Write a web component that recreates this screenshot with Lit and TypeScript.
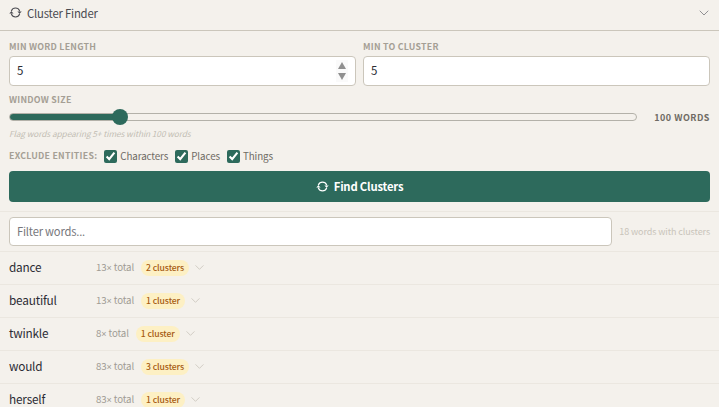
import { LitElement, html, css, svg } from "lit";
import { customElement, state } from "lit/decorators.js";

const chevron = (color: string, w: number) => html`<svg class="chev" width=${w} height=${w} viewBox="0 0 24 24" fill="none" stroke=${color} stroke-width="1.6" stroke-linecap="round" stroke-linejoin="round"><path d="M4 8l8 8 8-8"></path></svg>`;

const refresh = (size: number, width: number) => html`<svg width=${size} height=${size} viewBox="0 0 24 24" fill="none" stroke="currentColor" stroke-width=${width} stroke-linecap="round">
  ${svg`<path d="M4.5 9a8 8 0 0 1 15 0"></path>
  <path d="M19.5 15a8 8 0 0 1-15 0"></path>
  <path d="M23.5 10l-4 4.5-4-4.5z" fill="currentColor" stroke="none"></path>
  <path d="M.5 14l4-4.5 4 4.5z" fill="currentColor" stroke="none"></path>`}
</svg>`;

const WORDS = [
  { word: "dance", total: 13, clusters: 2 },
  { word: "beautiful", total: 13, clusters: 1 },
  { word: "twinkle", total: 8, clusters: 1 },
  { word: "would", total: 83, clusters: 3 },
  { word: "herself", total: 83, clusters: 1 },
];

@customElement("app-root")
export class AppRoot extends LitElement {
  @state() windowSize = 100;

  static styles = css`
    :host {
      display: block;
      height: 407px;
      overflow: hidden;
      background: #f4f1ec;
      color: #2c2c34;
      font-family: "Noto Sans CJK SC", "Noto Sans", sans-serif;
      font-size: 11px;
    }
    input, button { font-family: inherit; }
    .header {
      display: flex;
      align-items: center;
      justify-content: space-between;
      height: 30px;
      padding: 0 9px;
      border-bottom: 1px solid #cbc6bb;
      color: #4a4a50;
    }
    .title { display: flex; align-items: center; gap: 5px; font-size: 11.3px; letter-spacing: -0.2px; line-height: 26px; margin-top: -5px; }
    .header .chev { margin-top: -5px; }
    .settings { padding: 10px 9px 0; }
    .cols { display: grid; grid-template-columns: 1fr 1fr; gap: 7px; }
    .label {
      display: block;
      font-size: 8.8px;
      line-height: 12px;
      font-weight: 700;
      letter-spacing: 0.25px;
      color: #a59f95;
    }
    .cols .label { margin-bottom: 3px; }
    .field { position: relative; }
    .text {
      display: block;
      width: 100%;
      box-sizing: border-box;
      height: 30px;
      padding: 0 7px 2px;
      background: #fff;
      border: 1px solid #cbc6bb;
      border-radius: 4px;
      font-size: 11.5px;
      color: #2c2c34;
      outline: none;
    }
    .text::-webkit-inner-spin-button { -webkit-appearance: none; }
    .text::placeholder { color: #77777c; font-size: 11.2px; letter-spacing: -0.2px; }
    .spin {
      position: absolute;
      top: 4px;
      right: 8px;
      width: 12px;
      height: 22px;
      display: flex;
      flex-direction: column;
      align-items: center;
      justify-content: space-between;
      padding: 2px 0;
      box-sizing: border-box;
      background: #fafafa;
    }
    .up, .down { width: 0; height: 0; border-left: 4.5px solid transparent; border-right: 4.5px solid transparent; }
    .up { border-bottom: 7px solid #8f8f8f; }
    .down { border-top: 7px solid #8f8f8f; }
    .window { margin-top: 8px; }
    .slider-row { display: flex; align-items: center; gap: 17px; margin-top: 1px; height: 20px; }
    input[type="range"] {
      -webkit-appearance: none;
      appearance: none;
      flex: 1;
      min-width: 0;
      margin: 0;
      height: 16px;
      background: transparent;
    }
    input[type="range"]::-webkit-slider-runnable-track {
      height: 8px;
      box-sizing: border-box;
      border: 1px solid #b3b1a9;
      border-radius: 4px;
      background: linear-gradient(to right, #2d6a5c var(--fill), #f4f1ec var(--fill));
    }
    input[type="range"]::-webkit-slider-thumb {
      -webkit-appearance: none;
      width: 16px;
      height: 16px;
      margin-top: -5px;
      border-radius: 50%;
      background: #2d6a5c;
    }
    .value { font-size: 9px; font-weight: 700; letter-spacing: 0.5px; color: #6f6b64; white-space: nowrap; }
    .hint { font-size: 8.3px; letter-spacing: -0.08px; line-height: 12px; font-style: italic; color: #c2bdb3; }
    .exclude { display: flex; align-items: center; margin-top: 8px; height: 18px; }
    .exclude .label { margin-right: 7px; }
    .check { display: flex; align-items: center; gap: 3px; margin-right: 7px; margin-top: -1px; font-size: 9.8px; letter-spacing: -0.1px; color: #6f6b64; }
    .check input { width: 13px; height: 13px; margin: 1px 0 0; accent-color: #2d6a5c; }
    .find {
      display: flex;
      align-items: center;
      justify-content: center;
      gap: 5px;
      width: 100%;
      height: 31px;
      margin-top: 6px;
      padding: 0 0 2px;
      border: 0;
      border-radius: 4px;
      background: #2d6a5c;
      color: #fff;
      font-size: 11.3px;
      letter-spacing: -0.2px;
      font-weight: 600;
    }
    .find svg { margin-top: 1px; }
    .filter {
      display: flex;
      align-items: center;
      gap: 7px;
      margin-top: 9px;
      padding: 5px 9px;
      border-top: 1px solid #ebe7e0;
      border-bottom: 1px solid #ebe7e0;
    }
    .filter .text { flex: 1; height: 29px; min-width: 0; }
    .found { font-size: 9px; letter-spacing: -0.1px; color: #c9c4ba; white-space: nowrap; }
    .row {
      display: flex;
      align-items: center;
      height: 32px;
      padding: 0 9px;
      border-bottom: 1px solid #ebe7e0;
    }
    .word { width: 87px; margin-top: -3px; font-size: 11.8px; letter-spacing: -0.2px; color: #2c2c34; }
    .total { margin-top: -3px; font-size: 9.7px; letter-spacing: -0.1px; color: #a09c94; margin-right: 7px; }
    .row .chev { margin-top: -2px; }
    .x { font-family: "Liberation Sans", sans-serif; font-size: 9px; }
    .badge {
      padding: 0 5px;
      height: 16px;
      line-height: 15px;
      border-radius: 8px;
      background: #fdf0c4;
      color: #a65a10;
      font-size: 8.6px;
      letter-spacing: -0.1px;
      font-weight: 500;
      margin-right: 5px;
    }
  `;

  render() {
    return html`
      <div class="header">
        <div class="title">${refresh(13, 2)}<span>Cluster Finder</span></div>
        ${chevron("#77777c", 12)}
      </div>
      <div class="settings">
        <div class="cols">
          <div>
            <label class="label">MIN WORD LENGTH</label>
            <div class="field">
              <input class="text" type="number" value="5" />
              <span class="spin"><i class="up"></i><i class="down"></i></span>
            </div>
          </div>
          <div>
            <label class="label">MIN TO CLUSTER</label>
            <input class="text" type="text" value="5" />
          </div>
        </div>
        <div class="window">
          <label class="label">WINDOW SIZE</label>
          <div class="slider-row">
            <input type="range" min="0" max="600" step="10" .value=${String(this.windowSize)} style="--fill: 17.5%" />
            <span class="value">${this.windowSize} WORDS</span>
          </div>
        </div>
        <div class="hint">Flag words appearing 5+ times within 100 words</div>
        <div class="exclude">
          <span class="label">EXCLUDE ENTITIES:</span>
          ${["Characters", "Places", "Things"].map(
            (name) => html`<label class="check"><input type="checkbox" checked />${name}</label>`
          )}
        </div>
        <button class="find">${refresh(13, 2.4)}Find Clusters</button>
      </div>
      <div class="filter">
        <input class="text" type="text" placeholder="Filter words..." />
        <span class="found">18 words with clusters</span>
      </div>
      ${WORDS.map(
        (w) => html`<div class="row">
          <span class="word">${w.word}</span>
          <span class="total">${w.total}<span class="x">×</span> total</span>
          <span class="badge">${w.clusters} ${w.clusters === 1 ? "cluster" : "clusters"}</span>
          ${chevron("#c4bfb5", 11)}
        </div>`
      )}
    `;
  }
}
